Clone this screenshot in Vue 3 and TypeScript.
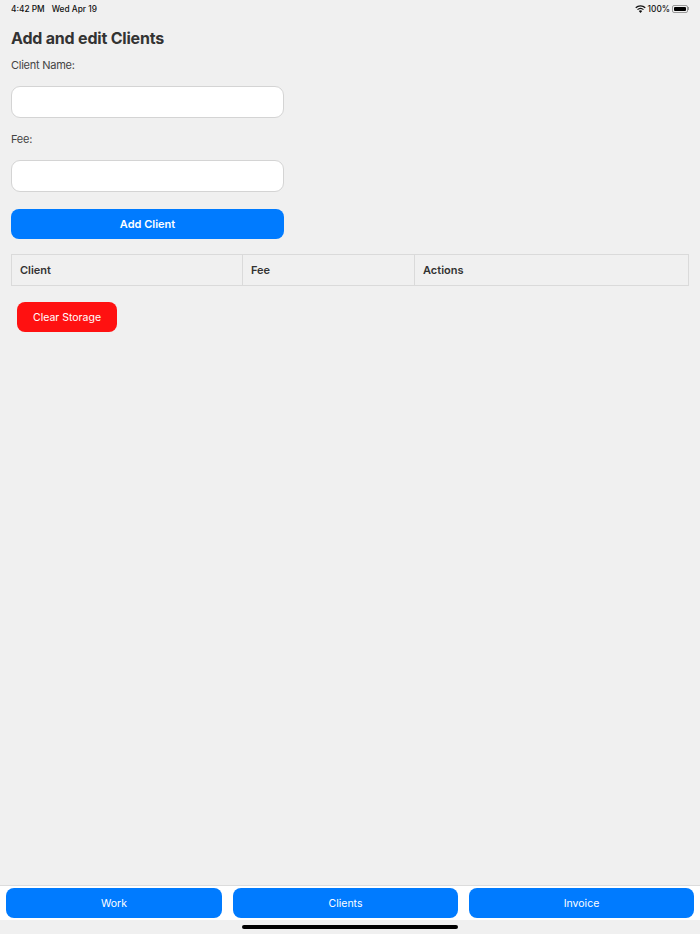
<script setup lang="ts">
const tabs: { label: string; cls: string }[] = [
  { label: 'Work', cls: 'work' },
  { label: 'Clients', cls: 'clients' },
  { label: 'Invoice', cls: 'invoice' },
]
</script>

<template>
  <div class="screen">
    <header class="status">
      <div class="status-left"><span>4:42 PM</span><span>Wed Apr 19</span></div>
      <div class="status-right">
        <svg class="wifi" width="11" height="8" viewBox="0 0 11 8">
          <path d="M5.5 8 3.8 6.1a2.5 2.5 0 0 1 3.4 0Z" fill="#111" />
          <path d="M2.9 5.1a3.9 3.9 0 0 1 5.2 0l.8-.9a5.1 5.1 0 0 0-6.8 0Z" fill="#111" />
          <path d="M1.2 3.3a6.3 6.3 0 0 1 8.6 0l.9-1A7.6 7.6 0 0 0 .3 2.3Z" fill="#111" />
        </svg>
        <span>100%</span>
        <div class="battery"><div class="battery-fill"></div></div>
        <div class="battery-cap"></div>
      </div>
    </header>

    <main class="content">
      <h1>Add and edit Clients</h1>
      <label class="field-label">Client Name:</label>
      <input class="field" type="text" />
      <label class="field-label">Fee:</label>
      <input class="field" type="text" />
      <button class="primary">Add Client</button>
      <table>
        <thead>
          <tr>
            <th class="col-client">Client</th>
            <th class="col-fee">Fee</th>
            <th>Actions</th>
          </tr>
        </thead>
      </table>
      <button class="danger">Clear Storage</button>
    </main>

    <nav class="tabs">
      <button v-for="t in tabs" :key="t.label" class="tab" :class="t.cls">{{ t.label }}</button>
    </nav>
    <div class="home"><div class="home-bar"></div></div>
  </div>
</template>

<style>
html, body { margin: 0; background: #f0f0f0; }
</style>

<style scoped>
.screen {
  width: 700px;
  height: 934px;
  display: flex;
  flex-direction: column;
  background: #f0f0f0;
  color: #333;
  font-family: Inter, "Liberation Sans", sans-serif;
  overflow: hidden;
}
.status {
  height: 17px;
  padding: 0 11px;
  display: flex;
  justify-content: space-between;
  align-items: center;
  font-size: 8.3px;
  font-weight: 500;
  color: #111;
}
.status-left { display: flex; gap: 7px; }
.status-right { display: flex; align-items: center; }
.wifi { margin-right: 2px; }
.battery {
  box-sizing: border-box;
  margin-left: 2px;
  width: 16px;
  height: 8px;
  padding: 1px;
  border: 1px solid #999;
  border-radius: 2px;
}
.battery-fill { height: 100%; background: #000; border-radius: 1px; }
.battery-cap { width: 1px; height: 3px; background: #999; }
.content {
  flex: 1;
  padding: 0 11px;
  display: flex;
  flex-direction: column;
  align-items: flex-start;
}
h1 {
  margin: 11px 0 0;
  font-size: 16px;
  letter-spacing: -0.2px;
  line-height: 20px;
  font-weight: 700;
}
.field-label {
  margin-top: 10px;
  font-size: 11px;
  letter-spacing: -0.25px;
  line-height: 15px;
  color: #444;
}
.field {
  box-sizing: border-box;
  width: 273px;
  height: 32px;
  margin: 13px 0 14px;
  border: 1px solid #d4d4d4;
  border-radius: 9px;
  background: #fff;
  outline: none;
}
.field + .field-label { margin-top: 0; }
.primary {
  width: 273px;
  height: 30px;
  margin-top: 3px;
  border: none;
  border-radius: 8px;
  background: #007bff;
  color: #fff;
  font: 600 11px Inter, "Liberation Sans", sans-serif;
}
table {
  width: 678px;
  margin-top: 15px;
  border-collapse: collapse;
  table-layout: fixed;
}
th {
  height: 30px;
  padding: 0 8px;
  border: 1px solid #dadada;
  text-align: left;
  font-size: 11px;
  font-weight: 600;
  color: #333;
}
.col-client { width: 214px; }
.col-fee { width: 155px; }
.danger {
  width: 100px;
  height: 30px;
  margin: 16px 0 0 6px;
  border: none;
  border-radius: 8px;
  background: #ff1111;
  color: #fff;
  font: 400 10.5px Inter, "Liberation Sans", sans-serif;
}
.tabs {
  height: 35px;
  padding: 2px 6px 0;
  box-sizing: border-box;
  border-top: 1px solid #dcdcdc;
  background: #fff;
  display: flex;
  gap: 11px;
}
.tab {
  height: 30px;
  border: none;
  border-radius: 8px;
  background: #007bff;
  color: #fff;
  font: 400 10.5px Inter, "Liberation Sans", sans-serif;
}
.work { width: 216px; }
.clients { width: 225px; }
.invoice { width: 225px; }
.home {
  height: 14px;
  display: flex;
  justify-content: center;
  padding-top: 5px;
  box-sizing: border-box;
}
.home-bar { width: 216px; height: 4px; border-radius: 2px; background: #000; }
</style>
